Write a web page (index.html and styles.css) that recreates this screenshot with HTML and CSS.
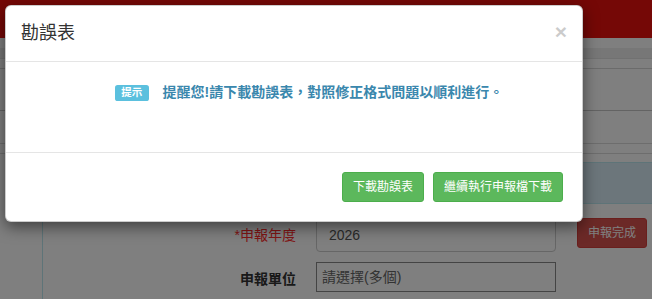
FILE: index.html
```html
<!DOCTYPE html>
<html lang="zh-Hant">
<head>
<meta charset="utf-8">
<title>勘誤表</title>
<link rel="stylesheet" href="styles.css">
</head>
<body>
<div class="page">
  <div class="topbar"></div>
  <div class="strip s1"></div>
  <div class="strip s2"></div>
  <div class="strip s3"></div>
  <div class="strip s4"></div>
  <div class="strip s5"></div>
  <div class="strip s6"></div>
  <div class="panel">
    <div class="panel-heading"></div>
    <div class="panel-body">
      <div class="form-grid">
        <label class="control-label required">*申報年度</label>
        <div class="form-control rounded">2026</div>
        <button class="btn btn-sm btn-danger">申報完成</button>
        <label class="control-label strong">申報單位</label>
        <div class="form-control select">請選擇(多個)</div>
      </div>
    </div>
  </div>
</div>
<div class="backdrop"></div>
<div class="modal">
  <div class="modal-header">
    <button class="close" type="button">×</button>
    <h4 class="modal-title">勘誤表</h4>
  </div>
  <div class="modal-body">
    <span class="label label-info">提示</span><b class="text-info">提醒您!請下載勘誤表，對照修正格式問題以順利進行。</b>
  </div>
  <div class="modal-footer">
    <button class="btn btn-sm btn-success" type="button">下載勘誤表</button>
    <button class="btn btn-sm btn-success" type="button">繼續執行申報檔下載</button>
  </div>
</div>
</body>
</html>
```
FILE: styles.css
```css
* { box-sizing: border-box; }
html, body { margin: 0; padding: 0; }
body {
  width: 652px;
  height: 299px;
  overflow: hidden;
  background: #fff;
  color: #333;
  font-family: "Liberation Sans", "Noto Sans CJK TC", sans-serif;
  font-size: 14px;
  line-height: 1.42857;
  position: relative;
}

.page { width: 652px; height: 299px; overflow: hidden; }
.topbar { height: 38px; background: #ea110d; }
.strip { background: #fff; }
.s1 { height: 10px; }
.s2 { height: 11px; background: #eee; border-bottom: 1px solid #e2e2e2; }
.s3 { height: 10px; border-bottom: 1px solid #d6d6d6; }
.s4 { height: 42px; border-bottom: 1px solid #c6c6c6; }
.s5 { height: 33px; border-bottom: 1px solid #dadada; }
.s6 { height: 10px; border-bottom: 1px solid #dadada; margin-bottom: 8px; }

.panel {
  margin-left: 42px;
  margin-right: -20px;
  border: 1px solid #bce8f1;
  border-bottom: 0;
  height: 137px;
}
.panel-heading {
  height: 41px;
  background: #d9edf7;
  border-bottom: 1px solid #bce8f1;
}
.panel-body { padding: 14px 0 0 0; }

.form-grid {
  display: grid;
  grid-template-columns: 253px 241px 70px;
  column-gap: 20px;
  row-gap: 10px;
  align-items: start;
}
.control-label {
  text-align: right;
  padding-top: 7px;
  line-height: 20px;
  font-size: 14px;
}
.required { color: #ff2a2a; }
.strong { font-weight: bold; color: #333; }
.form-control {
  width: 240px;
  border: 1px solid #ccc;
  background: #fff;
  color: #555;
  font-size: 14px;
}
.rounded {
  height: 34px;
  padding: 6px 12px;
  line-height: 20px;
  border-radius: 4px;
}
.select {
  height: 30px;
  padding: 4px 5px;
  line-height: 20px;
  border-color: #888;
  color: #666;
}

.btn {
  display: inline-block;
  font-family: inherit;
  border: 1px solid transparent;
  cursor: pointer;
  color: #fff;
}
.btn-sm {
  padding: 5px 10px;
  font-size: 12px;
  line-height: 18px;
  border-radius: 3px;
  height: 30px;
}
.btn-danger { background: #d9534f; border-color: #d43f3a; width: 70px; padding: 5px 0; }
.btn-success { background: #5cb85c; border-color: #4cae4c; }

.backdrop {
  position: absolute;
  inset: 0;
  background: rgba(0, 0, 0, 0.5);
}

.modal {
  position: absolute;
  top: 5px;
  left: 5px;
  width: 578px;
  background: #fff;
  border: 1px solid rgba(0, 0, 0, 0.2);
  border-radius: 6px;
  box-shadow: 0 5px 15px rgba(0, 0, 0, 0.5);
}
.modal-header {
  padding: 15px;
  border-bottom: 1px solid #e5e5e5;
}
.modal-title {
  margin: 0;
  font-size: 18px;
  font-weight: 400;
  line-height: 25px;
  color: #333;
}
.close {
  float: right;
  margin-top: 0;
  padding: 0;
  border: 0;
  background: transparent;
  font-family: "Liberation Sans", sans-serif;
  font-size: 21px;
  font-weight: bold;
  line-height: 1;
  color: #000;
  opacity: 0.2;
}
.modal-body {
  height: 90px;
  padding: 20px 20px 0 109px;
  line-height: 20px;
}
.label {
  display: inline-block;
  font-size: 10.5px;
  font-weight: bold;
  line-height: 1;
  padding: 0.2em 0.6em 0.3em;
  border-radius: 0.25em;
  color: #fff;
  vertical-align: 1px;
  margin-right: 14px;
}
.label-info { background: #5bc0de; }
.text-info { color: #3a87ad; font-size: 14px; }

.modal-footer {
  border-top: 1px solid #e5e5e5;
  padding: 19px 19px 19px 20px;
  display: flex;
  justify-content: flex-end;
  gap: 9px;
}
```
